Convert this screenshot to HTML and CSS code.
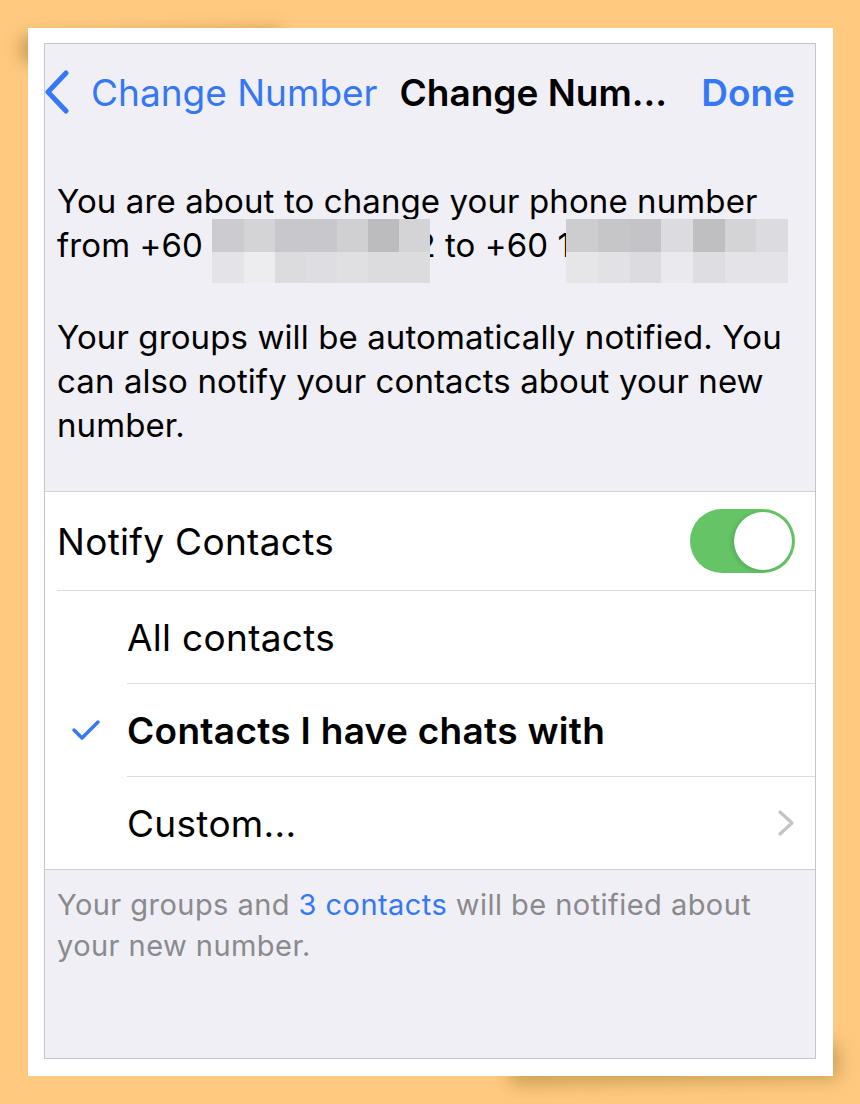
FILE: index.html
```html
<!DOCTYPE html>
<html lang="en">
<head>
    <meta charset="UTF-8">
    <meta name="viewport" content="width=device-width, initial-scale=1.0">
    <title>Change Number</title>
    <link rel="stylesheet" href="styles.css">
</head>
<body>
    <div class="card">
        <div class="screen">
            <div class="navbar">
                <a class="nav-back" href="#">
                    <svg class="back-icon" width="26" height="44" viewBox="0 0 26 44">
                        <path d="M21 3 L3 22 L21 41" fill="none" stroke="#3478f6" stroke-width="5" stroke-linecap="round" stroke-linejoin="round"/>
                    </svg>
                    <span>Change Number</span>
                </a>
                <span class="nav-title">Change Num...</span>
                <a class="nav-done" href="#">Done</a>
            </div>

            <div class="intro">
                <p>You are about to change your phone number from +60 <span class="redact redact-one"><span class="tiles">
                    <i style="background:#ccccd0"></i><i style="background:#d4d4d6"></i><i style="background:#c8c8cc"></i><i style="background:#c8c8cc"></i><i style="background:#d0d0d3"></i><i style="background:#bcbcbf"></i><i style="background:#d4d4d6"></i>
                    <i style="background:#e4e4e8"></i><i style="background:#ededf0"></i><i style="background:#dcdcdf"></i><i style="background:#dedee2"></i><i style="background:#e0e0e3"></i><i style="background:#dcdcdf"></i><i style="background:#dcdcdf"></i>
                </span></span>2 to +60 1<span class="redact redact-two"><span class="tiles">
                    <i style="background:#cdcdd0"></i><i style="background:#c6c6c9"></i><i style="background:#c4c4c8"></i><i style="background:#dcdce0"></i><i style="background:#bfbfc2"></i><i style="background:#d4d4d7"></i><i style="background:#dcdce0"></i>
                    <i style="background:#e6e6e9"></i><i style="background:#e2e2e6"></i><i style="background:#dcdce0"></i><i style="background:#eaeaee"></i><i style="background:#dedee2"></i><i style="background:#e4e4e8"></i><i style="background:#e4e4e8"></i>
                </span></span></p>
                <p>Your groups will be automatically notified. You can also notify your contacts about your new number.</p>
            </div>

            <div class="group">
                <div class="row row-switch">
                    <span>Notify Contacts</span>
                    <span class="switch on"><span class="knob"></span></span>
                </div>
                <div class="row row-option">
                    <span>All contacts</span>
                </div>
                <div class="row row-option selected">
                    <svg class="check" width="30" height="22" viewBox="0 0 30 22">
                        <path d="M3 11 L11 19 L27 3" fill="none" stroke="#3478f6" stroke-width="3.5" stroke-linecap="round" stroke-linejoin="round"/>
                    </svg>
                    <span>Contacts I have chats with</span>
                </div>
                <div class="row row-option">
                    <span>Custom...</span>
                    <svg class="chevron" width="18" height="28" viewBox="0 0 18 28">
                        <path d="M3 3 L15 14 L3 25" fill="none" stroke="#c4c4c7" stroke-width="3.2" stroke-linecap="round" stroke-linejoin="round"/>
                    </svg>
                </div>
            </div>

            <p class="footnote">Your groups and <a href="#">3 contacts</a> will be notified about your new number.</p>
        </div>
    </div>
</body>
</html>
```

FILE: styles.css
```css
body {
    margin: 0;
    background-color: #ffca7f;
    font-family: Inter, Roboto, "Liberation Sans", sans-serif;
    color: #000;
    padding: 28px 27px 28px 28px;
}
a {
    text-decoration: none;
    color: #3478f6;
}
.card {
    position: relative;
    width: 805px;
    height: 1048px;
    box-sizing: border-box;
    padding: 15px 17px 17px 16px;
    background-color: #fff;
}
/* curled paper shadows at two corners */
.card::before {
    content: "";
    position: absolute;
    left: -6px;
    top: 6px;
    width: 260px;
    height: 24px;
    background: rgba(90, 60, 0, 0.4);
    filter: blur(9px);
    transform: rotate(-1.5deg);
    z-index: -1;
}
.card::after {
    content: "";
    position: absolute;
    right: -6px;
    bottom: -6px;
    width: 330px;
    height: 36px;
    background: rgba(90, 60, 0, 0.3);
    filter: blur(9px);
    transform: rotate(-1deg);
    z-index: -1;
}
.screen {
    height: 100%;
    box-sizing: border-box;
    border: 1px solid #c6c6c9;
    background-color: #f0eff5;
}

/* nav bar */
.navbar {
    height: 96px;
    display: flex;
    align-items: center;
    padding-right: 20px;
    font-size: 37px;
}
.nav-back {
    display: flex;
    align-items: center;
}
.back-icon {
    margin-right: 20px;
}
.nav-title {
    font-weight: 600;
    margin-left: 22px;
}
.nav-done {
    margin-left: auto;
    font-weight: 600;
}

/* explanation text */
.intro {
    padding: 39px 12px 0 12px;
    font-size: 33px;
    line-height: 44px;
    letter-spacing: 0.1px;
}
.intro p {
    margin: 0 0 48px 0;
}
.intro p:last-child {
    margin-bottom: 0;
}
/* pixelated cover over the phone digits */
.redact {
    position: relative;
    display: inline-block;
    height: 1px;
}
.redact-one {
    width: 203px;
}
.redact-two {
    width: 150px;
}
.tiles {
    position: absolute;
    left: 0;
    top: -37px;
    height: 64px;
    display: grid;
    grid-template-columns: repeat(7, 1fr);
    grid-template-rows: 33px 31px;
}
.redact-one .tiles {
    width: 218px;
}
.redact-two .tiles {
    left: -5px;
    width: 222px;
}

/* settings group */
.group {
    margin-top: 44px;
    background-color: #fff;
    border-top: 1px solid #d1d1d6;
    border-bottom: 1px solid #cfcfd3;
    font-size: 37px;
    letter-spacing: 0.3px;
}
.row {
    position: relative;
    display: flex;
    align-items: center;
    height: 92px;
    padding: 0 20px 0 12px;
}
.row-switch {
    height: 98px;
    border-bottom: 1px solid #dedee2;
    margin-left: 12px;
    padding-left: 0;
}
.row-option {
    padding-left: 0;
    margin-left: 82px;
}
.row-option + .row-option {
    border-top: 1px solid #dedee2;
}
.selected span {
    font-weight: 600;
}
.check {
    position: absolute;
    left: -56px;
    top: 35px;
}
.chevron {
    margin-left: auto;
}
.switch {
    margin-left: auto;
    width: 105px;
    height: 64px;
    border-radius: 32px;
    background-color: #65c466;
    display: flex;
    align-items: center;
    justify-content: flex-end;
    padding: 3px;
    box-sizing: border-box;
}
.knob {
    width: 58px;
    height: 58px;
    border-radius: 50%;
    background-color: #fff;
    box-shadow: -2px 1px 4px rgba(0, 80, 0, 0.2);
}

.footnote {
    margin: 14px 0 0 0;
    padding: 0 12px;
    font-size: 29px;
    line-height: 41px;
    color: #8a8a8e;
    letter-spacing: 0.45px;
}
```
